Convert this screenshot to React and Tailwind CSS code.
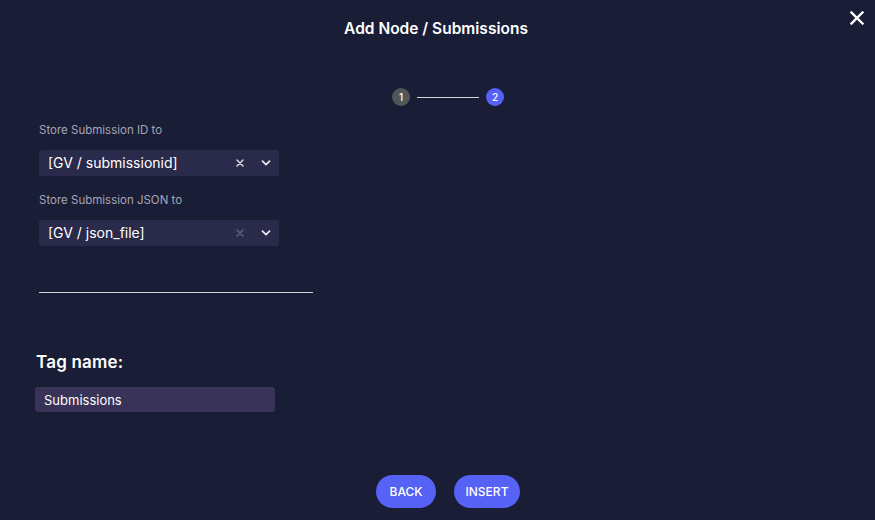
const font = { fontFamily: '"Inter", "Open Sans", sans-serif' };

const Chevron = () => (
  <svg width="10" height="6" viewBox="0 0 10 6" fill="none" stroke="#e5e7eb" strokeWidth="1.8" strokeLinecap="round" strokeLinejoin="round">
    <path d="M1.5 1.2 5 4.6l3.5-3.4" />
  </svg>
);

const Clear = ({ dim }) => (
  <svg width="8" height="8" viewBox="0 0 8 8" fill="none" stroke={dim ? '#5f6078' : '#d4d4dc'} strokeWidth="1.6" strokeLinecap="round">
    <path d="M1 1l6 6M7 1 1 7" />
  </svg>
);

const Select = ({ value, dim }) => (
  <div className="flex items-center w-[240px] h-[26px] rounded-[3px] bg-[#2a2a4a] pl-[9px] pr-[8px]">
    <span className="flex-1 text-[14px] text-white leading-none">{value}</span>
    <span className="w-[8px] flex justify-center mr-[17px]">
      <Clear dim={dim} />
    </span>
    <Chevron />
  </div>
);

const Field = ({ label, value, dim }) => (
  <div className="flex flex-col">
    <label className="text-[11.5px] leading-4 text-[#a5a7b8]">{label}</label>
    <div className="mt-[12px]">
      <Select value={value} dim={dim} />
    </div>
  </div>
);

export default function App() {
  return (
    <div className="relative w-full h-[520px] bg-[#191d35] text-white overflow-hidden" style={font}>
      <button className="absolute top-[11px] right-[11px] text-white">
        <svg width="14" height="14" viewBox="0 0 14 14" fill="none" stroke="currentColor" strokeWidth="2.4" strokeLinecap="square">
          <path d="M1.5 1.5l11 11M12.5 1.5l-11 11" />
        </svg>
      </button>

      <h1 className="pt-[19px] pr-[3px] text-center text-[15.5px] leading-5 font-semibold">
        Add Node / Submissions
      </h1>

      {/* stepper */}
      <div className="mt-[49px] flex justify-center pl-[21px]">
        <div className="flex items-center">
          <span className="w-[18px] h-[18px] rounded-full bg-[#4e5858] flex items-center justify-center text-[10px] font-medium">1</span>
          <span className="w-[62px] h-px bg-[#d6d6d6] mx-[7px]" />
          <span className="w-[18px] h-[18px] rounded-full bg-[#5661f6] flex items-center justify-center text-[10px] font-medium">2</span>
        </div>
      </div>

      <div className="px-[39px] mt-[16px] flex flex-col">
        <div className="flex flex-col gap-[16px]">
          <Field label="Store Submission ID to" value="[GV / submissionid]" />
          <Field label="Store Submission JSON to" value="[GV / json_file]" dim />
        </div>

        <div className="mt-[46px] w-[274px] h-px bg-[#d4d4d4]" />

        <h2 className="mt-[57px] -ml-[3px] text-[17px] leading-6 font-semibold tracking-[0.2px]">Tag name:</h2>
        <input
          className="mt-[13px] -ml-[4px] w-[240px] h-[25px] rounded-[3px] bg-[#3a3358] px-[9px] text-[13px] text-white outline-none"
          defaultValue="Submissions"
        />
      </div>

      <div className="mt-[63px] flex justify-center pl-[21px] gap-[18px]">
        <button className="h-[33px] w-[60px] rounded-full bg-[#5661f6] text-[12px] font-medium text-white">BACK</button>
        <button className="h-[33px] w-[66px] rounded-full bg-[#5661f6] text-[12px] font-medium text-white">INSERT</button>
      </div>
    </div>
  );
}
